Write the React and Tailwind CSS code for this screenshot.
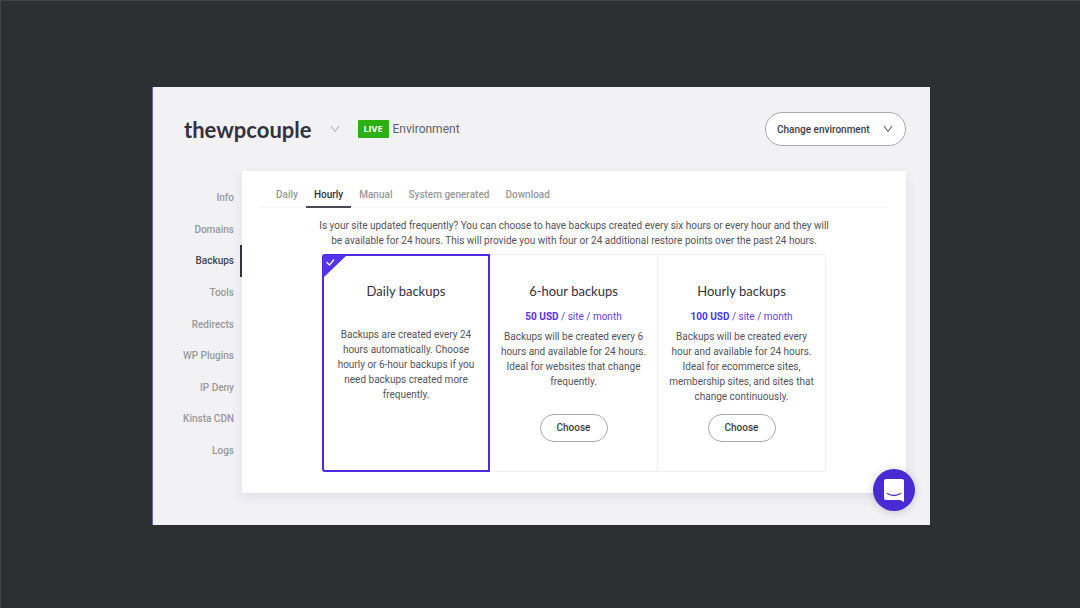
const navItems = ['Info', 'Domains', 'Backups', 'Tools', 'Redirects', 'WP Plugins', 'IP Deny', 'Kinsta CDN', 'Logs'];
const tabs = ['Daily', 'Hourly', 'Manual', 'System generated', 'Download'];

const plans = [
  {
    name: 'Daily backups',
    text: 'Backups are created every 24 hours automatically. Choose hourly or 6-hour backups if you need backups created more frequently.',
    selected: true,
  },
  {
    name: '6-hour backups',
    price: '50 USD',
    text: 'Backups will be created every 6 hours and available for 24 hours. Ideal for websites that change frequently.',
  },
  {
    name: 'Hourly backups',
    price: '100 USD',
    text: 'Backups will be created every hour and available for 24 hours. Ideal for ecommerce sites, membership sites, and sites that change continuously.',
  },
];

const Chevron = () => (
  <svg viewBox="0 0 10 8" className="h-2 w-[10px]" fill="none" stroke="currentColor" aria-hidden="true">
    <path d="M1 1l4 5.500L9 1" />
  </svg>
);

const Header = () => (
  <header className="flex items-center justify-between pt-[25px] pr-6 pl-[31px]">
    <div className="flex items-center">
      <h1 className="pt-[2px] font-[Lato,sans-serif] text-[22px] leading-8 font-bold text-[#34313f]">thewpcouple</h1>
      <button type="button" aria-label="Switch site" className="ml-[18px] text-[#aaa9b0]">
        <Chevron />
      </button>
      <span className="ml-[18px] w-[31px] rounded-[1px] bg-[#2fb012] text-center font-['Open_Sans',sans-serif] text-[9px] leading-[18px] font-bold text-white">
        LIVE
      </span>
      <span className="ml-1 text-[12px] text-[#63616b]">Environment</span>
    </div>
    <button
      type="button"
      className="flex h-[34px] w-[141px] items-center justify-between rounded-full border border-[#a9a9ad] bg-white pr-3 pl-[11px] text-[10px] font-medium text-[#3f3c4a]"
    >
      Change environment
      <Chevron />
    </button>
  </header>
);

const Sidebar = () => (
  <nav className="mt-[11px] flex h-[284px] w-[89px] shrink-0 flex-col">
    {navItems.map((item) => (
      <a
        key={item}
        href="#"
        className={`flex flex-1 items-center justify-end border-r-2 pr-[6px] text-[10px] font-medium ${
          item === 'Backups' ? 'border-[#34313f] text-[#46434f]' : 'border-transparent text-[#99989c]'
        }`}
      >
        {item}
      </a>
    ))}
  </nav>
);

const Plan = ({ plan }) => (
  <section
    className={`relative flex flex-col items-center pb-[29px] text-center ${
      plan.selected
        ? 'rounded-l-[3px] border-2 border-[#4b2adf] px-3 pt-[27px]'
        : 'border-y border-r border-[#f0f0f3] px-[10px] pt-7 last:rounded-r-[3px]'
    }`}
  >
    {plan.selected && (
      <svg viewBox="0 0 24 23" className="absolute -top-px -left-px h-[23px] w-6" aria-hidden="true">
        <path d="M0 0h24L0 23z" fill="#5333ed" />
        <path d="M3.500 7l3 3L11 4.500" fill="none" stroke="#fff" strokeWidth="1.200" />
      </svg>
    )}
    <h2 className="font-[Lato,sans-serif] text-[13px] leading-4 text-[#34313f]">{plan.name}</h2>
    {plan.price && (
      <p className="mt-[10px] text-[10px] leading-[15px] text-[#5f43ee]">
        <strong className="font-bold text-[#5333ed]">{plan.price}</strong> / site / month
      </p>
    )}
    <p className={`text-[10px] leading-[15px] text-[#55535e] ${plan.selected ? 'mt-7' : 'mt-[5px]'}`}>{plan.text}</p>
    {!plan.selected && (
      <button
        type="button"
        className="mt-auto h-7 w-[68px] rounded-full border border-[#a9a9ad] bg-white pb-px text-[10px] font-medium text-[#3f3c4a]"
      >
        Choose
      </button>
    )}
  </section>
);

const App = () => {
  return (
    <div className="min-h-screen border-t border-l border-[#414347] bg-[#2e2f33] pt-[86px] pr-[150px] pb-[83px] pl-[151px] font-[Roboto,sans-serif]">
      <div className="relative border-l border-[#6c63b8] bg-[#f2f2f5] pb-8">
        <Header />
        <div className="mt-[25px] flex pr-6">
          <Sidebar />
          <main className="min-w-0 flex-1 rounded-b-[2px] bg-white px-[18px] pt-[11px] pb-[21px] shadow-[0_4px_12px_rgba(60,50,120,0.1)]">
            <div className="flex border-b border-[#f5f5f7] pl-2" role="tablist">
              {tabs.map((tab) => (
                <button
                  key={tab}
                  type="button"
                  role="tab"
                  aria-selected={tab === 'Hourly'}
                  className={`-mb-px h-[26px] border-b-2 px-2 text-[10px] font-medium ${
                    tab === 'Hourly' ? 'border-[#4a4756] text-[#34313f]' : 'border-transparent text-[#99989c]'
                  }`}
                >
                  {tab}
                </button>
              ))}
            </div>
            <p className="mx-auto mt-[10px] max-w-[520px] text-center text-[10px] leading-[15px] text-[#55535e]">
              Is your site updated frequently? You can choose to have backups created every six hours or every hour and they will
              be available for 24 hours. This will provide you with four or 24 additional restore points over the past 24 hours.
            </p>
            <div className="mx-auto mt-[6px] grid min-h-[218px] max-w-[504px] grid-cols-3">
              {plans.map((plan) => (
                <Plan key={plan.name} plan={plan} />
              ))}
            </div>
          </main>
        </div>
        <button
          type="button"
          aria-label="Open chat"
          className="absolute right-[15px] bottom-[14px] flex h-[42px] w-[42px] items-center justify-center rounded-full bg-[#482bd2] shadow-[0_1px_8px_rgba(0,0,0,0.18)]"
        >
          <svg viewBox="0 0 22 24" className="h-6 w-[22px]" aria-hidden="true">
            <path d="M3 1h16q2 0 2 2v21l-4-2H3q-2 0-2-2V3q0-2 2-2z" fill="#fff" />
            <path d="M4.500 15.500q6.500 4 13 0" fill="none" stroke="#482bd2" strokeWidth="1.300" strokeLinecap="round" />
          </svg>
        </button>
      </div>
    </div>
  );
};

export default App;
